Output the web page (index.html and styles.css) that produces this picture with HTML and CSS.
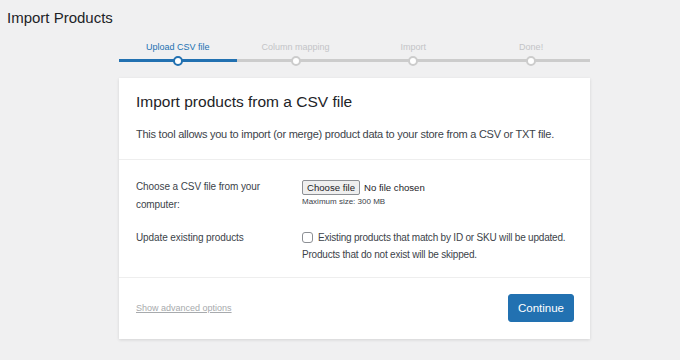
FILE: index.html
```html
<!DOCTYPE html>
<html lang="en">
<head>
<meta charset="UTF-8" />
<title>Import Products</title>
<link rel="stylesheet" href="styles.css">
</head>
<body>

<h1 class="page-title">Import Products</h1>

<div class="wrap">
  <!-- Progress steps -->
  <ol class="steps">
    <li class="step active">Upload CSV file</li>
    <li class="step">Column mapping</li>
    <li class="step">Import</li>
    <li class="step">Done!</li>
  </ol>

  <div class="card">
    <header class="card-head">
      <h2>Import products from a CSV file</h2>
      <p>This tool allows you to import (or merge) product data to your store from a CSV or TXT file.</p>
    </header>

    <section class="card-body">
      <div class="row">
        <label class="row-label" for="upload">Choose a CSV file from your computer:</label>
        <div class="row-field">
          <div class="file">
            <span class="file-btn">Choose file</span>
            <span class="file-name">No file chosen</span>
          </div>
          <small class="hint">Maximum size: 300 MB</small>
        </div>
      </div>
      <div class="row">
        <div class="row-label">Update existing products</div>
        <div class="row-field">
          <label class="check"><span class="box"></span>Existing products that match by ID or SKU will be updated. Products that do not exist will be skipped.</label>
        </div>
      </div>
    </section>

    <footer class="card-foot">
      <a href="#" class="advanced">Show advanced options</a>
      <button class="btn-primary">Continue</button>
    </footer>
  </div>
</div>

</body>
</html>
```

FILE: styles.css
```css
* {
  margin: 0; padding: 0; box-sizing: border-box;
}
body {
  background: #f0f0f1;
  color: #3c434a;
  font-family: "Liberation Sans", Arial, sans-serif;
  font-size: 11px;
  width: 680px;
  height: 360px;
  overflow: hidden;
}
.page-title {
  font-weight: 400;
  font-size: 15px;
  color: #1d2327;
  padding: 9px 0 0 7px;
  height: 36px;
}
.wrap {
  width: 471px;
  margin-left: 119px;
}

/* steps */
.steps {
  list-style: none;
  display: flex;
  height: 42px;
}
.step {
  flex: 1;
  position: relative;
  text-align: center;
  font-size: 9px;
  color: #c3c4c7;
  padding-top: 6px;
  border-bottom: 3px solid #ccc;
  height: 26px;
}
.step::after {
  content: "";
  position: absolute;
  left: 50%;
  bottom: -6.5px;
  width: 6px;
  height: 6px;
  margin-left: -5px;
  border: 2px solid #ccc;
  border-radius: 50%;
  background: #fff;
}
.step.active {
  color: #2271b1;
  border-bottom-color: #2271b1;
}
.step.active::after {
  border-color: #2271b1;
}

/* card */
.card {
  background: #fff;
  box-shadow: 0 1px 3px rgba(0, 0, 0, 0.12);
  height: 261px;
}
.card-head {
  padding: 15px 17px 0;
  height: 82px;
  border-bottom: 1px solid #eee;
}
.card-head h2 {
  font-weight: 400;
  font-size: 15.5px;
  color: #1d2327;
  margin-bottom: 17px;
}
.card-head p {
  font-size: 11px;
  letter-spacing: -0.25px;
  color: #3c434a;
}
.card-body {
  padding: 18px 17px 0;
  height: 118px;
  border-bottom: 1px solid #eee;
}
.row {
  display: flex;
  margin-bottom: 15px;
}
.row-label {
  width: 166px;
  flex: none;
  line-height: 18px;
  padding-right: 30px;
  font-size: 10px;
  letter-spacing: -0.1px;
}
.row-field {
  flex: 1;
  font-size: 10px;
}
.file {
  display: flex;
  align-items: center;
  height: 18px;
  font-size: 9.6px;
  color: #1d2327;
}
.file-btn {
  border: 1px solid #8c8f94;
  border-radius: 2px;
  background: #efefef;
  padding: 0 4px;
  height: 15px;
  line-height: 13px;
  margin-right: 4px;
}
.hint {
  display: block;
  font-size: 8px;
  margin-top: 1px;
}
.check {
  display: block;
  line-height: 17px;
  letter-spacing: -0.2px;
}
.box {
  display: inline-block;
  vertical-align: -2px;
  width: 11px;
  height: 11px;
  border: 1px solid #8c8f94;
  border-radius: 3px;
  margin-right: 5px;
}
.card-foot {
  display: flex;
  align-items: center;
  justify-content: space-between;
  padding: 0 16px 0 17px;
  height: 60px;
}
.advanced {
  color: #a7aaad;
  font-size: 9px;
}
.btn-primary {
  background: #2271b1;
  color: #fff;
  border: 1px solid #2271b1;
  border-radius: 3px;
  font-family: inherit;
  font-size: 11.5px;
  width: 66px;
  height: 28px;
}
```
